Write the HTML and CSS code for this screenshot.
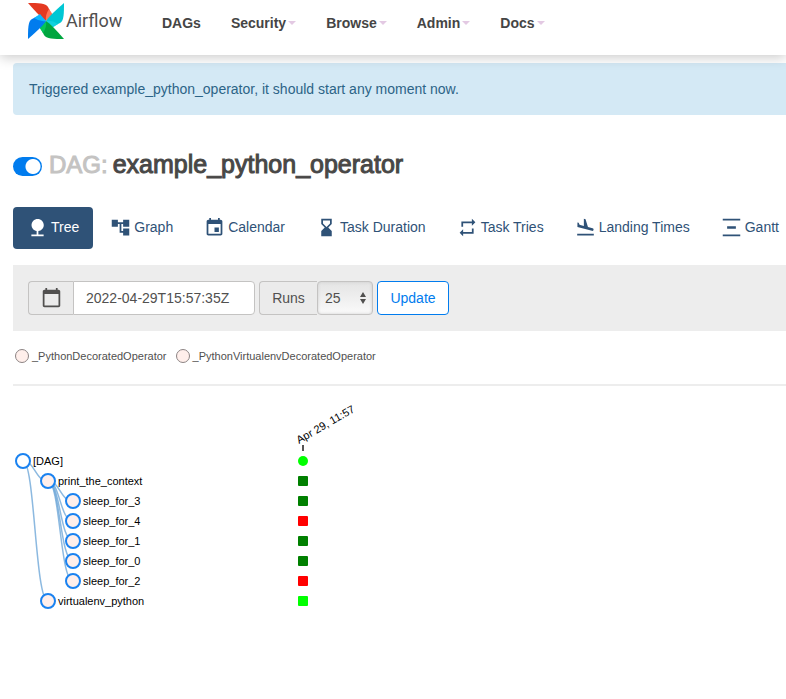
FILE: index.html
```html
<!DOCTYPE html>
<html lang="en">
<head>
<meta charset="utf-8">
<title>example_python_operator - Tree - Airflow</title>
<link rel="stylesheet" href="styles.css">
</head>
<body>
<header class="navbar">
  <a class="brand" href="#">
    <svg class="brand-mark" viewBox="0 0 36 36" aria-hidden="true">
      <g><path fill="#e43921" d="M0 0C10 0 18 0 20 4L23 10L18 18Q13 15 0 0Z"/><path fill="#ff7557" d="M21 6L25 12L18 18Q17 12 21 6Z"/></g>
      <g transform="rotate(90 18 18)"><path fill="#00c7d4" d="M0 0C10 0 18 0 20 4L23 10L18 18Q13 15 0 0Z"/><path fill="#11d1de" d="M21 6L25 12L18 18Q17 12 21 6Z"/></g>
      <g transform="rotate(180 18 18)"><path fill="#00a63f" d="M0 0C10 0 18 0 20 4L23 10L18 18Q13 15 0 0Z"/><path fill="#04c659" d="M21 6L25 12L18 18Q17 12 21 6Z"/></g>
      <g transform="rotate(270 18 18)"><path fill="#017cee" d="M0 0C10 0 18 0 20 4L23 10L18 18Q13 15 0 0Z"/><path fill="#0cb6ff" d="M21 6L25 12L18 18Q17 12 21 6Z"/></g>
    </svg>
    <span>Airflow</span>
  </a>
  <nav class="menu">
    <a href="#">DAGs</a>
    <a href="#">Security<i class="caret"></i></a>
    <a href="#">Browse<i class="caret"></i></a>
    <a href="#">Admin<i class="caret"></i></a>
    <a href="#">Docs<i class="caret"></i></a>
  </nav>
</header>
<main class="page">
  <div class="alert" role="status">Triggered example_python_operator, it should start any moment now.</div>
  <div class="title">
    <input class="switch" type="checkbox" role="switch" aria-label="Pause or unpause DAG" checked>
    <h1><span class="muted">DAG:</span>example_python_operator</h1>
  </div>
  <nav class="tabs">
    <a class="active" href="#"><svg viewBox="0 0 24 24"><path d="M13 16.120c3.470-.41 6.170-3.360 6.170-6.950 0-3.870-3.130-7-7-7s-7 3.130-7 7c0 3.470 2.520 6.340 5.830 6.890V20H5v2h14v-2h-6v-3.880z"/></svg>Tree</a>
    <a href="#"><svg viewBox="0 0 24 24"><path d="M22 11V3h-7v3H9V3H2v8h7V8h2v10h4v3h7v-8h-7v3h-2V8h2v3z"/></svg>Graph</a>
    <a href="#"><svg viewBox="0 0 24 24"><path d="M17 12h-5v5h5v-5zM16 1v2H8V1H6v2H5c-1.110 0-1.990.9-1.990 2L3 19c0 1.100.89 2 2 2h14c1.100 0 2-.9 2-2V5c0-1.100-.9-2-2-2h-1V1h-2zm3 18H5V8h14v11z"/></svg>Calendar</a>
    <a href="#"><svg viewBox="0 0 24 24"><path d="M6 2v6h.01L6 8.010 10 12l-4 4 .01.01H6V22h12v-5.990h-.01L18 16l-4-4 4-3.990-.01-.01H18V2H6zm10 5.500-4 4-4-4V4h8v3.500z"/></svg>Task Duration</a>
    <a href="#"><svg viewBox="0 0 24 24"><path d="M7 7h10v3l4-4-4-4v3H5v6h2V7zm10 10H7v-3l-4 4 4 4v-3h12v-6h-2v4z"/></svg>Task Tries</a>
    <a href="#"><svg viewBox="0 0 24 24"><path d="M2.500 19h19v2h-19zM19.340 15.850c.8.210 1.620-.26 1.840-1.060.21-.8-.26-1.620-1.060-1.840l-5.310-1.420-2.760-9.020L10.120 2v8.280L5.150 8.950l-.93-2.320-1.450-.39v5.170l16.570 4.440z"/></svg>Landing Times</a>
    <a href="#"><svg viewBox="0 0 24 24"><path d="M2 2h20v2H2zM2 20h20v2H2zM7 10.500h10v3H7z"/></svg>Gantt</a>
  </nav>
  <form class="filters">
    <div class="group">
      <label class="addon" for="base-date" aria-label="Base date"><svg viewBox="0 0 24 24"><path d="M20 3h-1V1h-2v2H7V1H5v2H4c-1.100 0-2 .9-2 2v16c0 1.100.9 2 2 2h16c1.100 0 2-.9 2-2V5c0-1.100-.9-2-2-2zm0 18H4V8h16v13z"/></svg></label>
      <input class="date" id="base-date" type="text" value="2022-04-29T15:57:35Z">
    </div>
    <div class="group">
      <label class="addon runs" for="runs">Runs</label>
      <span class="select">
        <select id="runs"><option>5</option><option selected>25</option><option>50</option><option>100</option></select>
        <svg viewBox="0 0 8 14" aria-hidden="true"><path d="M4 1l3 5H1zM4 13l3-5H1z"/></svg>
      </span>
    </div>
    <button class="update" type="button">Update</button>
  </form>
  <div class="legend">
    <span><i></i>_PythonDecoratedOperator</span>
    <span><i></i>_PythonVirtualenvDecoratedOperator</span>
  </div>
  <hr>
  <svg class="tree" width="500" height="220" viewBox="0 0 500 220" role="img" aria-label="Task tree">
    <g class="links">
      <path d="M10 66C22 66 22 86 35 86"/>
      <path d="M10 66C22 66 22 206 35 206"/>
      <path d="M35 86C47 86 47 106 60 106"/>
      <path d="M35 86C47 86 47 126 60 126"/>
      <path d="M35 86C47 86 47 146 60 146"/>
      <path d="M35 86C47 86 47 166 60 166"/>
      <path d="M35 86C47 86 47 186 60 186"/>
    </g>
    <g class="nodes">
      <circle class="root" cx="10" cy="66" r="7"/>
      <circle cx="35" cy="86" r="7"/>
      <circle cx="60" cy="106" r="7"/>
      <circle cx="60" cy="126" r="7"/>
      <circle cx="60" cy="146" r="7"/>
      <circle cx="60" cy="166" r="7"/>
      <circle cx="60" cy="186" r="7"/>
      <circle cx="35" cy="206" r="7"/>
    </g>
    <g class="labels">
      <text x="20" y="70">[DAG]</text>
      <text x="45" y="90">print_the_context</text>
      <text x="70" y="110">sleep_for_3</text>
      <text x="70" y="130">sleep_for_4</text>
      <text x="70" y="150">sleep_for_1</text>
      <text x="70" y="170">sleep_for_0</text>
      <text x="70" y="190">sleep_for_2</text>
      <text x="45" y="210">virtualenv_python</text>
      <text transform="translate(286 49) rotate(-30)">Apr 29, 11:57</text>
    </g>
    <path class="tick" d="M290 50v6"/>
    <g class="states">
      <circle class="running" cx="290" cy="66" r="5"/>
      <rect class="success" x="285" y="81" width="10" height="10" rx="1"/>
      <rect class="success" x="285" y="101" width="10" height="10" rx="1"/>
      <rect class="failed" x="285" y="121" width="10" height="10" rx="1"/>
      <rect class="success" x="285" y="141" width="10" height="10" rx="1"/>
      <rect class="success" x="285" y="161" width="10" height="10" rx="1"/>
      <rect class="failed" x="285" y="181" width="10" height="10" rx="1"/>
      <rect class="running" x="285" y="201" width="10" height="10" rx="1"/>
    </g>
  </svg>
</main>
</body>
</html>
```
FILE: styles.css
```css
* { box-sizing: border-box; }
body {
  margin: 0;
  background: #fff;
  color: #51504f;
  font: 14px/20px "Liberation Sans", Arial, sans-serif;
  overflow-x: hidden;
}
a { color: inherit; text-decoration: none; }
.navbar {
  position: relative;
  display: flex;
  height: 55px;
  padding-left: 28px;
  background: #fff;
  box-shadow: 0 2px 12px rgba(0, 0, 0, .22);
}
.brand {
  display: flex;
  gap: 2px;
  width: 119px;
  padding-top: 3px;
  font: 18px/36px Roboto, sans-serif;
}
.brand-mark { width: 36px; height: 36px; flex: none; }
.menu { display: flex; padding-top: 13px; font-weight: bold; color: #454545; }
.menu a { display: flex; align-items: center; gap: 2px; height: 20px; padding: 0 15px; }
.caret { border: 4px solid transparent; border-top-color: #e3c9e3; border-bottom: 0; }
.page { padding: 8px 0 20px 13px; }
.alert {
  padding: 16px;
  background: #d4e9f5;
  color: #2c6487;
  border-radius: 4px 0 0 4px;
}
.title { display: flex; align-items: center; gap: 7px; margin-top: 34px; height: 32px; }
.switch {
  appearance: none;
  flex: none;
  width: 29px;
  height: 19px;
  margin: 3px 0 0;
  border-radius: 10px;
  background: radial-gradient(circle at 20px 50%, #fff 7px, #017cee 8px);
}
h1 {
  margin: 0;
  color: #484746;
  font-size: 25px;
  font-weight: normal;
  line-height: 30px;
  padding-bottom: 2px;
  white-space: nowrap;
  -webkit-text-stroke: 1px;
}
.muted { margin-right: 5px; font-size: 24px; color: #c4c3c2; }
.tabs { display: flex; gap: 3px; margin-top: 26px; overflow: hidden; }
.tabs a {
  display: flex;
  flex: none;
  align-items: center;
  gap: 3px;
  height: 42px;
  padding: 0 14px 2px;
  border-radius: 4px;
  color: #2f5277;
}
.tabs svg { width: 21px; height: 21px; fill: currentColor; }
.tabs .active { background: #2f5277; color: #fff; }
.filters { display: flex; gap: 4px; margin-top: 16px; padding: 16px 15px; background: #ededed; }
.group { display: flex; height: 34px; }
.addon {
  display: flex;
  align-items: center;
  justify-content: center;
  width: 45px;
  padding-bottom: 1px;
  border: 1px solid #c4c3c2;
  border-right: 0;
  border-radius: 4px 0 0 4px;
  background: #ebebeb;
}
.addon svg { width: 21px; height: 21px; fill: currentColor; }
.runs { width: 58px; padding-bottom: 0; }
.date {
  width: 182px;
  padding: 0 12px;
  border: 1px solid #c4c3c2;
  border-radius: 0 4px 4px 0;
  background: #fff;
  color: inherit;
  font: inherit;
}
.select { position: relative; display: flex; }
.select select {
  appearance: none;
  width: 56px;
  padding: 0 7px;
  border: 1px solid #c4c3c2;
  border-radius: 4px;
  background: linear-gradient(#e4e4e4, #fafafa);
  box-shadow: inset 0 0 3px #ccc;
  color: inherit;
  font: inherit;
}
.select svg { position: absolute; right: 6px; top: 10px; width: 8px; height: 14px; fill: #51504f; pointer-events: none; }
.update {
  width: 72px;
  height: 34px;
  padding: 0;
  border: 1px solid #017cee;
  border-radius: 4px;
  background: #fff;
  color: #017cee;
  font: inherit;
}
.legend { display: flex; gap: 9px; padding: 15px 2px 18px; font-size: 11px; }
.legend span { display: flex; align-items: center; gap: 3px; }
.legend i { width: 14px; height: 14px; border: 1px solid #8c8484; border-radius: 50%; background: #ffefeb; }
hr { margin: 0; border: 0; border-top: 2px solid #ededed; }
.tree { display: block; margin-top: 9px; max-width: 100%; overflow: visible; }
.links path { fill: none; stroke: #6fa7d8; stroke-opacity: .8; stroke-width: 1.5; }
.nodes circle { fill: #ffefeb; stroke: #1a82f0; stroke-width: 2; }
.nodes .root { fill: #fff; }
.labels { fill: #000; font-size: 11px; }
.tick { stroke: #555; stroke-width: 2; }
.running { fill: #0f0; }
.success { fill: #008000; }
.failed { fill: #f00; }
```
